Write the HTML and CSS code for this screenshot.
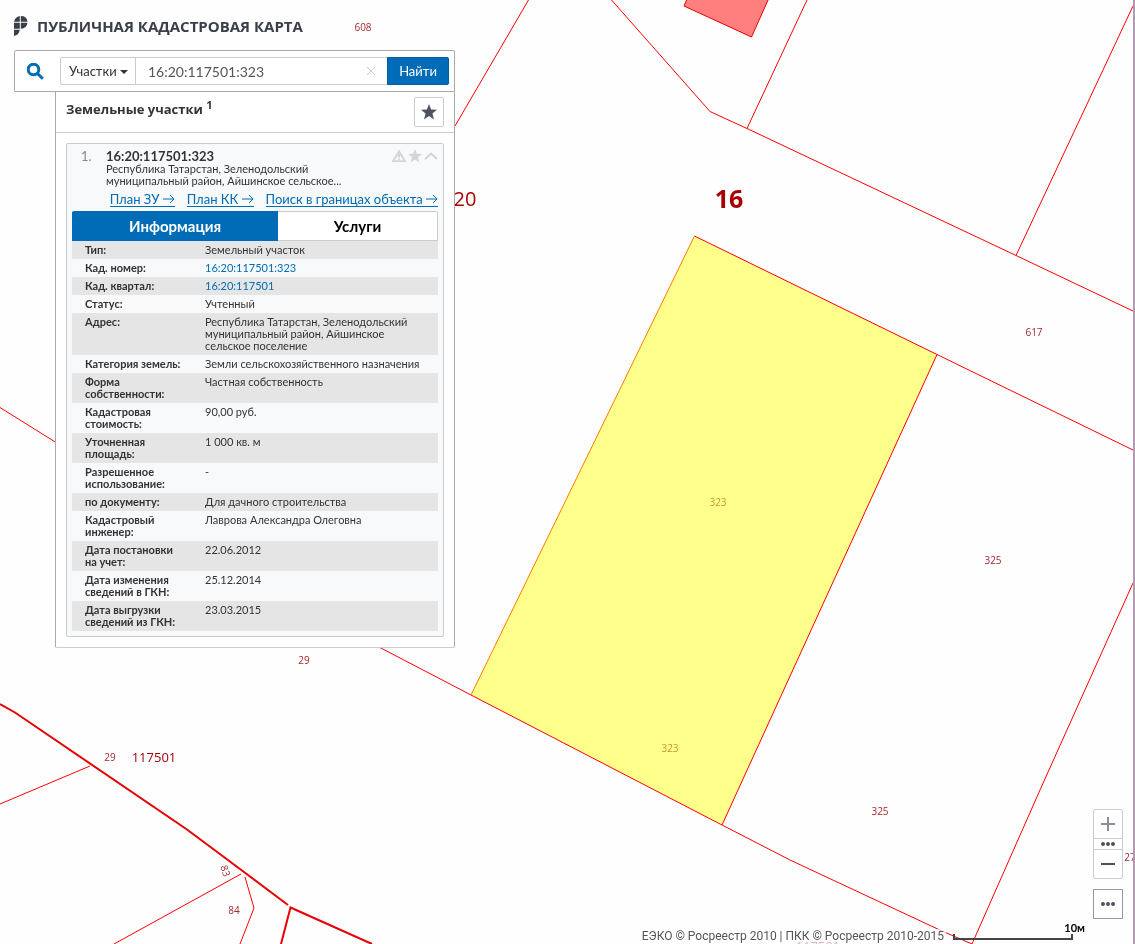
FILE: index.html
```html
<!DOCTYPE html>
<html lang="ru">
<head>
<meta charset="utf-8">
<title>Публичная кадастровая карта</title>
<link rel="stylesheet" href="styles.css">
</head>
<body>
<svg class="map" viewBox="0 0 1135 944" preserveAspectRatio="xMinYMin slice" role="img" aria-label="Карта">
  <polygon class="building" points="687,-1 684,6 751.5,37 768.5,-1"/>
  <g class="boundary">
    <path d="M528.5 0L455 126M611.500 0L710 111.500L747 128.500L1016 255.500L1133 311M807 0L747 128.500M1133 6L1016 255.500M937 354.500L1133 450M0 407.500L56 442.500M377 646L471 695M722 825L790 860L943 931.500L972 944L1040 790L1133 583M0 804L90 766M241 874L114 944M245 877L254 908L240 944"/>
  </g>
  <polygon class="parcel" points="694.5,236 937,354.5 722,825 471,695"/>
  <path class="boundary" d="M694.500 236L937 354.500L722 825L471 695"/>
  <path class="parcel-edge" d="M471 695L694.500 236"/>
  <path class="quarter" d="M0 704L15 712.500L187 829.500L244 872L288 905M281 944L290.500 907.500L372 944"/>
  <g class="label">
    <text x="363" y="31">608</text>
    <text x="1034" y="336">617</text>
    <text x="993" y="564">325</text>
    <text x="880" y="815">325</text>
    <text x="304" y="664">29</text>
    <text x="110" y="761">29</text>
    <text x="234" y="914">84</text>
    <text x="1130" y="861">27</text>
    <text transform="translate(222 872) rotate(72)">83</text>
  </g>
  <g class="label label-own">
    <text x="718" y="506">323</text>
    <text x="670" y="752">323</text>
  </g>
  <g class="label label-quarter">
    <text x="154" y="762">117501</text>
    <text x="818" y="951">117501</text>
  </g>
  <text class="label label-district" x="465" y="206">20</text>
  <text class="label label-region" x="729" y="208">16</text>
</svg>

<div class="page">
  <main class="sidebar">
    <header class="brand">
      <svg class="brand-logo" width="14" height="20" viewBox="0 0 14 20" aria-hidden="true">
        <path d="M0 5.800Q1 1 5.800 0V5.800ZM6.800 0Q13 0 13.500 5.800H6.800ZM0 6.800H5.800V12.800H0ZM6.800 6.800H13.500Q13 12.500 6.800 12.800ZM0 13.800H5.800Q5 19 0 20Z"/>
      </svg>
      <h1 class="brand-title">ПУБЛИЧНАЯ КАДАСТРОВАЯ КАРТА</h1>
    </header>

    <form class="search">
      <svg class="search-icon" width="17" height="17" viewBox="0 0 17 17" aria-hidden="true">
        <circle cx="6.500" cy="6.500" r="5.300"/><path d="M10.500 10.500L15.800 15.800"/>
      </svg>
      <div class="search-group">
        <div class="type">
          <select class="type-select" aria-label="Тип объекта"><option>Участки</option></select>
          <svg class="type-caret" width="8" height="4" viewBox="0 0 8 4" aria-hidden="true"><path d="M0 0H8L4 4Z"/></svg>
        </div>
        <input class="query" type="text" value="16:20:117501:323" aria-label="Кадастровый номер">
        <button class="clear" type="button" aria-label="Очистить">
          <svg width="10" height="10" viewBox="0 0 10 10"><path d="M1 1L9 9M9 1L1 9"/></svg>
        </button>
        <button class="submit" type="button">Найти</button>
      </div>
    </form>

    <section class="results">
      <div class="results-head">
        <h2 class="results-title">Земельные участки <sup>1</sup></h2>
        <button class="favorites" type="button" aria-label="Избранное">
          <svg width="16" height="16" viewBox="0 0 16 16"><path d="M8 0L10.100 5.500L16 5.800L11.400 9.500L13 15.500L8 12.100L3 15.500L4.600 9.500L0 5.800L5.900 5.500Z"/></svg>
        </button>
      </div>

      <article class="card">
        <div class="card-head">
          <span class="card-index">1.</span>
          <div class="card-summary">
            <h3 class="card-title">16:20:117501:323</h3>
            <p class="card-address">Республика Татарстан, Зеленодольский муниципальный район, Айшинское сельское...</p>
          </div>
          <div class="card-tools">
            <button class="tool" type="button" aria-label="Сообщить об ошибке"><svg width="14" height="12" viewBox="0 0 14 12"><path class="line" d="M7 1.200L13 11.200H1Z"/><path class="line" d="M7 4V7.500M7 8.500V10"/></svg></button>
            <button class="tool" type="button" aria-label="В избранное"><svg width="14" height="14" viewBox="0 0 16 16"><path d="M8 0L10.100 5.500L16 5.800L11.400 9.500L13 15.500L8 12.100L3 15.500L4.600 9.500L0 5.800L5.900 5.500Z"/></svg></button>
            <button class="tool" type="button" aria-label="Свернуть"><svg width="14" height="12" viewBox="0 0 14 12"><path class="line" d="M1 9L7 3.500L13 9"/></svg></button>
          </div>
        </div>

        <nav class="links">
          <a class="link" href="#plan-zu">План ЗУ <svg class="arrow" width="12" height="10" viewBox="0 0 12 10"><path d="M0 5H11M7 1L11 5L7 9"/></svg></a>
          <a class="link" href="#plan-kk">План КК <svg class="arrow" width="12" height="10" viewBox="0 0 12 10"><path d="M0 5H11M7 1L11 5L7 9"/></svg></a>
          <a class="link" href="#search">Поиск в границах объекта <svg class="arrow" width="12" height="10" viewBox="0 0 12 10"><path d="M0 5H11M7 1L11 5L7 9"/></svg></a>
        </nav>

        <div class="tabs">
          <button class="tab tab-active" type="button">Информация</button>
          <button class="tab" type="button">Услуги</button>
        </div>

        <table class="details">
          <tr><th scope="row">Тип:</th><td>Земельный участок</td></tr>
          <tr><th scope="row">Кад. номер:</th><td><a href="#parcel">16:20:117501:323</a></td></tr>
          <tr><th scope="row">Кад. квартал:</th><td><a href="#quarter">16:20:117501</a></td></tr>
          <tr><th scope="row">Статус:</th><td>Учтенный</td></tr>
          <tr><th scope="row">Адрес:</th><td>Республика Татарстан, Зеленодольский муниципальный район, Айшинское сельское поселение</td></tr>
          <tr><th scope="row">Категория земель:</th><td>Земли сельскохозяйственного назначения</td></tr>
          <tr><th scope="row">Форма собственности:</th><td>Частная собственность</td></tr>
          <tr><th scope="row">Кадастровая стоимость:</th><td>90,00 руб.</td></tr>
          <tr><th scope="row">Уточненная площадь:</th><td>1 000 кв. м</td></tr>
          <tr><th scope="row">Разрешенное использование:</th><td>-</td></tr>
          <tr><th scope="row">по документу:</th><td>Для дачного строительства</td></tr>
          <tr><th scope="row">Кадастровый инженер:</th><td>Лаврова Александра Олеговна</td></tr>
          <tr><th scope="row">Дата постановки на учет:</th><td>22.06.2012</td></tr>
          <tr><th scope="row">Дата изменения сведений в ГКН:</th><td>25.12.2014</td></tr>
          <tr><th scope="row">Дата выгрузки сведений из ГКН:</th><td>23.03.2015</td></tr>
        </table>
      </article>
    </section>
  </main>

  <aside class="controls">
    <div class="zoom">
      <button class="zoom-step zoom-in" type="button" aria-label="Приблизить"><svg width="14" height="14" viewBox="0 0 14 14"><path d="M7 0V14M0 7H14"/></svg></button>
      <button class="zoom-levels" type="button" aria-label="Масштаб"><svg class="dots" width="14" height="4" viewBox="0 0 14 4"><circle cx="2" cy="2" r="2"/><circle cx="7" cy="2" r="2"/><circle cx="12" cy="2" r="2"/></svg></button>
      <button class="zoom-step" type="button" aria-label="Отдалить"><svg width="14" height="14" viewBox="0 0 14 14"><path d="M0 7H14"/></svg></button>
    </div>
    <button class="more" type="button" aria-label="Ещё"><svg class="dots" width="14" height="4" viewBox="0 0 14 4"><circle cx="2" cy="2" r="2"/><circle cx="7" cy="2" r="2"/><circle cx="12" cy="2" r="2"/></svg></button>
  </aside>

  <footer class="footer">
    <p class="credits">ЕЭКО © Росреестр 2010 | ПКК © Росреестр 2010-2015</p>
    <div class="scale"><span class="scale-label">10м</span><div class="scale-bar"></div></div>
  </footer>
</div>
</body>
</html>
```
FILE: styles.css
```css
* { box-sizing: border-box; }

body {
  margin: 0;
  background: #fefefe;
  color: #333;
  font-family: Lato, "Open Sans", "Noto Sans", sans-serif;
  font-size: 11px;
  line-height: 12px;
}

h1, h2, h3, p { margin: 0; }
button, input, select { font: inherit; color: inherit; }
button { display: flex; align-items: center; justify-content: center; padding: 0; border: 0; background: none; cursor: pointer; }
a { color: #006cb4; text-decoration: none; }

/* Map canvas */
.map { position: fixed; inset: 0; width: 100%; height: 100%; font-family: "Open Sans", "Noto Sans", sans-serif; }
.boundary { fill: none; stroke: #ff0000; stroke-width: 1; }
.quarter { fill: none; stroke: #e60000; stroke-width: 2; }
.building { fill: #ff7f7f; stroke: #e60000; }
.parcel { fill: #ffff8b; }
.parcel-edge { fill: none; stroke: #ff7a00; stroke-width: 1; }
.label { fill: #a52a32; font-size: 10px; text-anchor: middle; }
.label-own { fill: #c29a35; }
.label-quarter { fill: #a00008; font-size: 13px; }
.label-district { fill: #a80000; font-size: 20px; }
.label-region { fill: #a80000; font-size: 25px; font-weight: 700; }

.page {
  position: relative;
  display: grid;
  grid-template: 1fr auto / minmax(0, 441px) 1fr;
  min-height: 100vh;
  padding-left: 14px;
  border-right: 2px solid #b09bb0;
}

/* Heading */
.brand { display: flex; align-items: center; gap: 9px; height: 50px; padding-top: 2px; }
.brand-logo { fill: #3a3e49; }
.brand-title { color: #3a3e49; font-family: "Open Sans", "Noto Sans", sans-serif; font-size: 15px; font-weight: 700; line-height: 20px; white-space: nowrap; }

/* Search */
.search { display: flex; align-items: center; height: 42px; padding: 0 5px 0 12px; border: 1px solid #aaa; border-radius: 2px 2px 0 0; background: #fff; }
.search-icon { flex: none; margin-right: 16px; fill: none; stroke: #006cb4; stroke-width: 3; }
.search-group { display: flex; flex: 1; min-width: 0; height: 28px; border: 1px solid #ccc; border-radius: 2px; }
.type { position: relative; flex: none; width: 75px; border-right: 1px solid #ccc; }
.type-select { width: 100%; height: 100%; padding: 0 8px; border: 0; background: none; appearance: none; font-size: 13px; }
.type-caret { position: absolute; top: 12px; right: 7px; fill: #333; pointer-events: none; }
.query { flex: 1; min-width: 0; padding: 0 12px; border: 0; background: none; color: #555; font-size: 14px; }
.clear { width: 34px; }
.clear svg { fill: none; stroke: #ccc; stroke-width: 1; }
.submit { width: 62px; margin: -1px; border: 1px solid #005f9f; border-radius: 0 2px 2px 0; background: #006cb7; color: #fff; font-size: 13px; }

/* Results */
.results { margin-left: 41px; border: 1px solid #aaa; border-top: 0; border-bottom-color: #ccc; border-radius: 0 0 2px 2px; background: #fff; }
.results-head { display: flex; align-items: center; justify-content: space-between; height: 41px; padding: 0 10px; border-bottom: 1px solid #ccc; }
.results-title { padding-bottom: 6px; font-family: "Open Sans", "Noto Sans", sans-serif; font-size: 13px; line-height: 20px; }
.results-title sup { font-size: 11px; line-height: 0; }
.favorites { width: 30px; height: 30px; border: 1px solid #ccc; border-radius: 2px; }
.favorites svg { fill: #4c535f; }

.card { margin: 10px; padding: 5px; border: 1px solid #c8cacc; border-radius: 2px; background: #f8f9fb; }
.card-head { display: flex; height: 44px; padding-left: 9px; }
.card-index { width: 25px; color: #888; font-size: 13px; line-height: 15px; }
.card-summary { flex: 1; }
.card-title { font-size: 13px; line-height: 14px; }
.card-address { max-width: 250px; }
.card-tools { display: flex; gap: 2px; height: 14px; }
.tool svg { fill: #d4d5d9; }
.tool .line { fill: none; stroke: #d4d5d9; stroke-width: 2; }

.links { display: flex; justify-content: flex-end; gap: 12px; height: 18px; }
.link { height: 14px; border-bottom: 1px solid #006cb4; font-size: 13px; line-height: 12px; white-space: nowrap; }
.arrow { fill: none; stroke: #006cb4; }

.tabs { display: grid; grid-template-columns: 206fr 160fr; height: 30px; }
.tab { border: 1px solid #ccc; border-left: 0; border-radius: 0 2px 0 0; background: #fff; color: #000; font-size: 15px; font-weight: 700; }
.tab-active { border: 0; border-radius: 2px 0 0; background: #006cb7; color: #fff; }

.details { width: 100%; border-collapse: collapse; table-layout: fixed; }
.details th, .details td { padding: 3px 0; text-align: left; vertical-align: top; }
.details th { width: 133px; padding-left: 13px; padding-right: 20px; }
.details td { padding-right: 10px; }
.details tr:nth-child(odd) { background: #e5e5e5; }

/* Map controls */
.controls { display: flex; flex-direction: column; align-items: flex-end; justify-content: flex-end; gap: 10px; padding-right: 10px; }
.zoom { display: flex; flex-direction: column; width: 30px; border: 1px solid #ccc; border-radius: 2px; background: #fff; }
.zoom-step { height: 28px; }
.zoom svg { fill: none; stroke: #4c535f; stroke-width: 2; }
.zoom-in svg { opacity: .65; }
.zoom-levels { height: 12px; border: solid #ccc; border-width: 1px 0; }
.more { width: 30px; height: 30px; border: 1px solid #999; background: #fff; }
.controls .dots { fill: #4c535f; stroke: none; }

/* Footer */
.footer { display: flex; grid-column: 1 / -1; align-items: flex-end; justify-content: flex-end; height: 25px; padding-right: 60px; }
.credits { padding: 0 2px; background: rgba(255, 255, 255, .7); color: #555; font-family: Roboto, "Open Sans", sans-serif; font-size: 12px; line-height: 15px; white-space: nowrap; }
.scale { display: flex; flex-direction: column; width: 120px; height: 22px; margin-left: 7px; }
.scale-label { align-self: flex-end; margin-right: -12px; color: #000; font-size: 11px; font-weight: 700; line-height: 12px; }
.scale-bar { height: 6px; border: 2px solid #444; border-top: 0; }
```
